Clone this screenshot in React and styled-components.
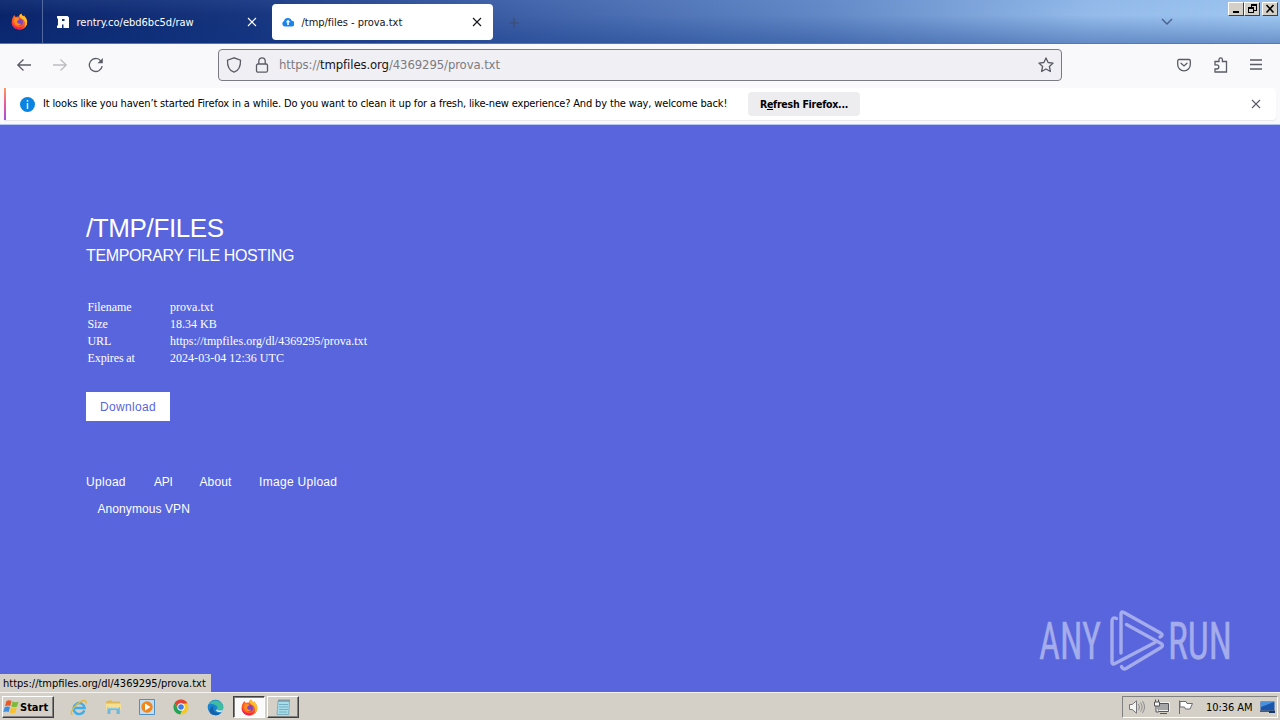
import styled, { createGlobalStyle } from "styled-components";

const links = [
    { label: "Upload", width: 68 },
    { label: "API", width: 45.5, spacing: "-0.3px" },
    { label: "About", width: 59.5, spacing: "0.1px" },
    { label: "Image Upload", width: 90 },
];

const details = [
    { label: "Filename", value: "prova.txt", spacing: "0.03px" },
    { label: "Size", value: "18.34 KB" },
    { label: "URL", value: "https://tmpfiles.org/dl/4369295/prova.txt", spacing: "0.03px" },
    { label: "Expires at", value: "2024-03-04 12:36 UTC", spacing: "0.03px" },
];

export default function App(){
    return(
    <>
        <GlobalStyle/>
        <Screen>
            <TabBar/>
            <Toolbar/>
            <Notification/>
            <Page/>
            <Taskbar/>
        </Screen>
    </>
    );
};

function TabBar(){
    return(
    <StyledTabBar>
        <PinnedTab><FirefoxIcon size={17}/></PinnedTab>
        <Tab>
            <svg width="12" height="12" viewBox="0 0 12 12">
                <path fill="#fff" d="M0 0h12v12H0z"/>
                <path fill="#14307c" d="M5 3h2.500v2H5zM5 8.500h1.500V12H5zM10.500 0H12v1.500zM0 2.500h1v7H0z"/>
            </svg>
            <TabTitle>rentry.co/ebd6bc5d/raw</TabTitle>
            <CloseIcon color="#fff"/>
        </Tab>
        <Tab $active>
            <svg width="12" height="12" viewBox="0 0 12 12">
                <path fill="#1b84ec" d="M3 10.5A2.9 2.9 0 0 1 2 5a4 4 0 0 1 7.7-.3A2.9 2.9 0 0 1 9.5 10.500z"/>
                <path fill="#fff" d="M6 3.800 8.300 6.300H6.800V9H5.200V6.300H3.700z"/>
            </svg>
            <TabTitle $spacing="-0.03px">/tmp/files - prova.txt</TabTitle>
            <CloseIcon color="#15141a"/>
        </Tab>
        <NewTab>
            <svg width="10" height="10" viewBox="0 0 10 10">
                <path d="M5 0v10M0 5h10" stroke="#3c4d70" strokeWidth="1.2"/>
            </svg>
        </NewTab>
        <TabsMenu>
            <svg width="12" height="8" viewBox="0 0 12 8">
                <path d="M1 1l5 5 5-5" fill="none" stroke="#47618c" strokeWidth="1.4"/>
            </svg>
        </TabsMenu>
        <WindowButtons>
            <WindowButton>
                <svg width="12" height="10"><path d="M3 7h6v2H3z" fill="#000"/></svg>
            </WindowButton>
            <WindowButton $gap>
                <svg width="12" height="10" viewBox="0 0 12 10" fill="none" stroke="#000" shapeRendering="crispEdges">
                    <path d="M5 3V.5h5.500V6H8M5 1.500h5M2.500 3.500h5v5h-5zM2.500 4.500h5"/>
                </svg>
            </WindowButton>
            <WindowButton>
                <svg width="12" height="10"><path d="M2.500 1l7 7.500M9.500 1l-7 7.500" stroke="#000" strokeWidth="1.600"/></svg>
            </WindowButton>
        </WindowButtons>
    </StyledTabBar>
    );
};

function Toolbar(){
    return(
    <StyledToolbar>
        <NavButtons>
            <Glyph width="16" height="16" viewBox="0 0 16 16"><path d="M15 8H1.500M7.500 2.500 1.800 8l5.700 5.500"/></Glyph>
            <Glyph width="16" height="16" viewBox="0 0 16 16" $color="#bdbdc2"><path d="M1 8h13.500M8.500 2.500 14.200 8l-5.700 5.500"/></Glyph>
            <Glyph width="16" height="16" viewBox="0 0 16 16">
                <path d="M14.200 9.200A6.500 6.500 0 1 1 12.800 3.800"/>
                <path d="M14.800 1v5.300H9.500z" fill="#5b5b66" stroke="none"/>
            </Glyph>
        </NavButtons>
        <UrlBar>
            <Glyph width="16" height="16" viewBox="0 0 16 16">
                <path d="M8 .800 1.500 3.200C1.300 8.500 3 13.500 8 15.200c5-1.700 6.700-6.700 6.500-12z"/>
            </Glyph>
            <Glyph width="14" height="16" viewBox="0 0 14 16">
                <rect x="1.500" y="7" width="11" height="8.200" rx="1.500"/>
                <path d="M3.800 7V4a3.200 3.200 0 0 1 6.400 0v3"/>
            </Glyph>
            <Url>https://<b>tmpfiles.org</b>/4369295/prova.txt</Url>
            <Glyph width="16" height="16" viewBox="0 0 16 16" strokeLinejoin="round">
                <path d="M8 .900l2.100 4.600 5 .600-3.700 3.400 1 5L8 12l-4.400 2.500 1-5L.900 6.100l5-.600z"/>
            </Glyph>
        </UrlBar>
        <ToolbarActions>
            <Glyph width="14" height="14" viewBox="0 0 14 14">
                <path d="M2 1.500h10a1.300 1.300 0 0 1 1.300 1.300V6.500a6.300 6.300 0 0 1-12.600 0V2.800A1.300 1.300 0 0 1 2 1.500z"/>
                <path d="M4 5.300 7 8l3-2.700" strokeLinecap="round"/>
            </Glyph>
            <Glyph width="15" height="16" viewBox="0 0 15 16">
                <path d="M2 7.300V4.500h4V2.600a1.700 1.700 0 0 1 3.400 0v1.900h4.100v10.500H2v-3h1.700a1.800 1.800 0 0 0 0-4.200H2z"/>
            </Glyph>
            <Glyph width="12" height="12" viewBox="0 0 12 12"><path d="M0 1h12M0 5.500h12M0 10h12"/></Glyph>
        </ToolbarActions>
    </StyledToolbar>
    );
};

function Notification(){
    return(
    <NotificationArea>
        <NotificationBar>
            <InfoIcon width="15" height="15" viewBox="0 0 15 15">
                <circle cx="7.500" cy="7.500" r="7.500" fill="#0a84e0"/>
                <path d="M7.500 3v1.800M7.500 6v6" stroke="#d8f0ff" strokeWidth="1.500"/>
            </InfoIcon>
            <Message>It looks like you haven’t started Firefox in a while. Do you want to clean it up for a fresh, like-new experience? And by the way, welcome back!</Message>
            <RefreshButton>R<u>e</u>fresh Firefox...</RefreshButton>
            <CloseIcon color="#5b5b66"/>
        </NotificationBar>
    </NotificationArea>
    );
};

function Page(){
    return(
    <StyledPage>
        <Content>
            <h1>/TMP/FILES</h1>
            <h2>TEMPORARY FILE HOSTING</h2>
            <Details>
                {details.map(({ label, value, spacing }) => (
                    <DetailRow key={label} $spacing={spacing}>
                        <dt>{label}</dt>
                        <dd>{value}</dd>
                    </DetailRow>
                ))}
            </Details>
            <Download>Download</Download>
            <Links>
                {links.map(({ label, width, spacing }) => (
                    <PageLink key={label} $width={width} $spacing={spacing}>{label}</PageLink>
                ))}
            </Links>
            <VpnLink $spacing="0.08px">Anonymous VPN</VpnLink>
        </Content>
        <Watermark/>
        <Status>https://tmpfiles.org/dl/4369295/prova.txt</Status>
    </StyledPage>
    );
};

function Watermark(){
    return(
    <StyledWatermark width="210" height="66" viewBox="0 0 210 66">
        <text x="2" y="50" textLength="62" lengthAdjust="spacingAndGlyphs">ANY</text>
        <text x="131" y="50" textLength="64" lengthAdjust="spacingAndGlyphs">RUN</text>
        <g fill="none" stroke="#a4acec" strokeWidth="3.400" strokeLinecap="round" strokeLinejoin="round">
            <path d="M79.500 9.500Q75 7.500 75 12V53Q75 56 78 54.500L118 33.500"/>
            <path d="M84 44V5Q84 2 87 3.500L123.500 24Q127 26 123 28"/>
            <path d="M89.500 15.500 124 34.500Q127 36.500 124 38.500L89 59.500Q86 61 84.500 57.500"/>
        </g>
    </StyledWatermark>
    );
};

function Taskbar(){
    return(
    <StyledTaskbar>
        <StartButton>
            <svg width="17" height="16" viewBox="0 0 17 16">
                <path fill="#e65a28" d="M3.500 2Q6 .500 8.500 2L7.300 7Q5 5.800 2 7z"/>
                <path fill="#7dba3c" d="M9.500 2.400q3 1.400 6 .300L14 7.700q-3 1-5.700-.300z"/>
                <path fill="#3c8fe0" d="M1.800 8q2.700-1.200 5.200 0L5.700 13Q3.200 11.800.300 13z"/>
                <path fill="#f6c22e" d="M8 8.400q2.800 1.300 5.700.300l-1.400 5q-3 1-5.700-.300z"/>
            </svg>
            <span>Start</span>
        </StartButton>
        <QuickLaunch>
            <TaskIcon><IeIcon/></TaskIcon>
            <TaskIcon><ExplorerIcon/></TaskIcon>
            <TaskIcon><PlayerIcon/></TaskIcon>
            <TaskIcon><ChromeIcon/></TaskIcon>
            <TaskIcon><EdgeIcon/></TaskIcon>
        </QuickLaunch>
        <TaskButton $pressed><FirefoxIcon size={17}/></TaskButton>
        <TaskButton><NotepadIcon/></TaskButton>
        <Tray>
            <svg width="18" height="16" viewBox="0 0 18 16" fill="none" stroke="#77777b">
                <path fill="#f5f5f3" d="M1.500 5.500h2.700L8.500 1.800v12.400l-4.300-3.700H1.500z"/>
                <path d="M10.500 5q2 3 0 6M12.500 3.500q3.200 4.500 0 9M14.500 2q4 6 0 12" stroke="#8d8d8f"/>
            </svg>
            <svg width="17" height="16" viewBox="0 0 17 16" fill="none" stroke="#55555a">
                <path fill="#a6a6a8" stroke="#f1f1ef" strokeWidth="2" d="M5 4h11v8H5z"/>
                <path d="M5 4.500h10.500v8H5zM7 14.500h7"/>
                <path fill="#f6f6f4" d="M1.500 3h5v4h-5zM2.500 3V.500M5.500 3V.500M3 7v6h2.500"/>
            </svg>
            <svg width="17" height="16" viewBox="0 0 17 16" stroke="#6d6d70">
                <path fill="#fff" d="M2.500 15V1.500M3 2.500h6l1 2h5.500L13 10H8.500L7.500 8H3z"/>
            </svg>
            <Clock>10:36 AM</Clock>
            <svg width="16" height="13" viewBox="0 0 16 13">
                <path fill="#1b56ad" d="M.500.500h14v9H.500z"/>
                <path fill="#4792df" d="M1 1h13L1 6z"/>
                <path fill="#163663" d="M0 9.500h15v1.300H0zM9 10h6v2H9z"/>
            </svg>
        </Tray>
    </StyledTaskbar>
    );
};

function CloseIcon({ color }){
    return(
    <svg width="10" height="10" viewBox="0 0 10 10">
        <path d="M1 1l8 8M9 1l-8 8" stroke={color} strokeWidth="1.100"/>
    </svg>
    );
};

function FirefoxIcon({ size }){
    return(
    <svg width={size} height={size} viewBox="0 0 17 17">
        <path fill="#ff5a28" d="M2.400 3.300 3.300 2l1.300 2q1.500-.600 3-.300Q8 1.800 10.200.500q.3 1.600 2 2.800l1-.800q.5 1.500 1.800 2.600Q17 8 16 11.300 14.200 16.500 8.500 16.500 2 16.300.800 10.500.200 6 2.400 3.300z"/>
        <path fill="#ffbd27" d="M10.200.500q.3 1.600 2 2.800l1-.800q.5 1.500 1.800 2.600 2 3.400.700 6.600-.8 1.500-2 2.300 1.300-4.500-1.200-7.200-2.800-1.400-4.300-3.500Q8.500 1.500 10.200.500z"/>
        <path fill="#ed2454" d="M.800 8q1 5.500 6.700 6.300 4 .300 5.700-2.300-1.400 4.300-5.200 4.500Q2 16.200.800 10.500z"/>
        <circle cx="8.500" cy="9.200" r="3.500" fill="#8047bd"/>
        <path fill="#ff8b20" d="M3.500 4.500Q6.500 4 8.500 6L6.500 7.700q-1.200 1.500.700 2.800 1.800.700 3-.3-.5 2.500-3.500 2.300Q3.400 11.600 3 8z"/>
    </svg>
    );
};

function IeIcon(){
    return(
    <svg width="18" height="17" viewBox="0 0 18 17" fill="none">
        <path d="M14.300 11.500A5.500 5.500 0 1 1 14.600 9H5" stroke="#3daee9" strokeWidth="2.400"/>
        <path d="M2.500 15.500C-.500 15.500 2 9.500 7.500 5S17 .500 16 4.500" stroke="#e3ba39" strokeWidth="1.400"/>
    </svg>
    );
};

function ExplorerIcon(){
    return(
    <svg width="17" height="16" viewBox="0 0 17 16">
        <path fill="#dfb957" d="M1 2.500 6 1l1 1.500h8V8H1z"/>
        <path fill="#f5df93" d="M1 4.500h15V11H1z"/>
        <path fill="#6fb8da" d="M2.500 8h12.300v7h-3.300v-4h-6v4h-3z"/>
        <path fill="#b5dfee" d="M3 8h11v1.500H3z"/>
    </svg>
    );
};

function PlayerIcon(){
    return(
    <svg width="16" height="16" viewBox="0 0 16 16">
        <path fill="#c3dcef" stroke="#4d91c5" d="M.500.500h15v15H.500z"/>
        <circle cx="8" cy="8" r="5.700" fill="#f1861c"/>
        <path fill="#fff" d="M6 4.500 11.500 8 6 11.500z"/>
    </svg>
    );
};

function ChromeIcon(){
    return(
    <svg width="16" height="16" viewBox="0 0 16 16">
        <circle cx="8" cy="8" r="7.500" fill="#f7c824"/>
        <path fill="#de4535" d="M1.500 4.200A7.500 7.500 0 0 1 14.500 4.300L8 5 5 9.500z"/>
        <path fill="#25a15a" d="M1.500 4.200 5 10l4 1.300-1.800 4.200A7.500 7.500 0 0 1 1.500 4.200z"/>
        <circle cx="8" cy="8" r="3.700" fill="#fff"/>
        <circle cx="8" cy="8" r="2.800" fill="#3e7de7"/>
    </svg>
    );
};

function EdgeIcon(){
    return(
    <svg width="17" height="17" viewBox="0 0 17 17">
        <circle cx="8.500" cy="8.500" r="7.800" fill="#1684cf"/>
        <path fill="#40bd9d" d="M2 5A7.800 7.800 0 0 1 16.300 8.500q0 3-3.500 3-2.600 0-3-1.300 1.500-2-.6-3.800Q6 4.300 2 5z"/>
        <path fill="#1660aa" d="M6.500 7Q5 10 8 13q2.500 1.700 6.200.200-2 3.200-6 3.100Q1 15.300 3 10 4 7.500 6.500 7z"/>
        <path fill="#d9edf0" d="M9.800 10.200q.400 1.300 3 1.300 2.500 0 3.300-1.500-.5 2-1.700 3-4 .6-5.400-1.200z"/>
    </svg>
    );
};

function NotepadIcon(){
    return(
    <svg width="15" height="17" viewBox="0 0 15 17">
        <path fill="#a8dce9" stroke="#6ba5b5" strokeWidth=".800" d="M2 2h11.500l-.8 13.500H1z"/>
        <path d="M3 5.500h9M3 8h9M3 10.500h9M3 13h8" stroke="#5c9eb2" strokeWidth=".700"/>
        <path d="M2.500 1.500h11" stroke="#536e78" strokeWidth="1.800" strokeDasharray="1 1"/>
    </svg>
    );
};

const GlobalStyle = createGlobalStyle`
* {
    box-sizing: border-box;
}
body {
    margin: 0;
    overflow: hidden;
}
svg {
    display: block;
    flex-shrink: 0;
}
`;

const Screen = styled.div`
    display: flex;
    flex-direction: column;
    width: 1280px;
    height: 720px;
    overflow: hidden;
    font-family: "DejaVu Sans Condensed", "DejaVu Sans", sans-serif;
    font-stretch: condensed;
    font-size: 11px;
    color: #000;
`;

const StyledTabBar = styled.div`
    display: flex;
    height: 44px;
    flex-shrink: 0;
    background:
        linear-gradient(180deg, rgba(120, 160, 220, 0.1), rgba(10, 50, 130, 0) 35%, rgba(10, 50, 130, 0.35)),
        linear-gradient(99deg, #0a246a 0%, #17357f 20%, #3d5fa6 40%, #6288c6 64%, #94bbea 85%, #a0c8f2 100%);
    border-bottom: 1px solid #6d7483;
`;

const PinnedTab = styled.div`
    display: flex;
    align-items: center;
    width: 43px;
    padding-left: 11px;
    border-right: 1px solid #5268a0;
`;

const Tab = styled.div`
    display: flex;
    align-items: center;
    width: ${({ $active }) => $active ? "221px" : "219px"};
    height: 36px;
    margin: 4px 0 0 ${({ $active }) => $active ? "10px" : "0"};
    padding: 0 ${({ $active }) => $active ? "11px 0 10px" : "5px 0 14px"};
    border-radius: 4px;
    background: ${({ $active }) => $active ? "#fff" : "transparent"};
    color: ${({ $active }) => $active ? "#15141a" : "#fff"};
`;

const TabTitle = styled.span`
    flex: 1;
    margin-left: 7.5px;
    letter-spacing: ${({ $spacing }) => $spacing || "0"};
    white-space: nowrap;
`;

const NewTab = styled.div`
    padding: 18px 0 0 16px;
`;

const TabsMenu = styled.div`
    margin-left: auto;
    padding: 18px 55px 0 0;
`;

const WindowButtons = styled.div`
    display: flex;
    padding: 2px 2px 0 0;
`;

const WindowButton = styled.div`
    width: 16px;
    height: 14px;
    margin-right: ${({ $gap }) => $gap ? "2px" : "0"};
    padding: 1px;
    background: #d4d0c8;
    border: 1px solid;
    border-color: #fff #404040 #404040 #fff;
`;

const StyledToolbar = styled.div`
    display: flex;
    align-items: center;
    height: 44px;
    padding-bottom: 3px;
    flex-shrink: 0;
    background: #f9f9fb;
`;

const Glyph = styled.svg`
    fill: none;
    stroke: ${({ $color }) => $color || "#5b5b66"};
    stroke-width: 1.3;
`;

const NavButtons = styled.div`
    display: flex;
    gap: 20px;
    width: 218px;
    padding-left: 16px;
`;

const UrlBar = styled.div`
    display: flex;
    align-items: center;
    gap: 13px;
    width: 844px;
    height: 32px;
    padding: 0 7px;
    margin-top: 1px;
    background: #f0f0f4;
    border: 1px solid #7b7b83;
    border-radius: 4px;
`;

const Url = styled.span`
    flex: 1;
    margin: -2px 0 0 -3px;
    font-size: 13px;
    letter-spacing: -0.11px;
    color: #7b7b82;
    b {
        font-weight: 400;
        color: #15141a;
    }
`;

const ToolbarActions = styled.div`
    display: flex;
    align-items: center;
    gap: 22px;
    margin-left: auto;
    padding-right: 18px;
`;

const NotificationArea = styled.div`
    height: 37px;
    flex-shrink: 0;
    padding: 0 4px;
    background: #f9f9fb;
    border-bottom: 1px solid #b5c5f5;
`;

const NotificationBar = styled.div`
    display: flex;
    align-items: center;
    height: 32px;
    padding-right: 15px;
    background: linear-gradient(#ff9a62, #e65a9b 50%, #9b4fe0) left / 2px 100% no-repeat, #fff;
    border-radius: 0 4px 4px 0;
    box-shadow: 0 1px 1px #e6e6ea;
    > svg:last-child {
        margin-left: auto;
    }
`;

const InfoIcon = styled.svg`
    margin-left: 16px;
`;

const Message = styled.span`
    width: 705px;
    margin: -1px 0 0 8px;
    letter-spacing: -0.147px;
    white-space: nowrap;
`;

const RefreshButton = styled.div`
    width: 112px;
    height: 24px;
    line-height: 25px;
    background: #ededf0;
    border-radius: 4px;
    font-size: 10.5px;
    font-weight: 700;
    letter-spacing: -0.25px;
    text-align: center;
`;

const StyledPage = styled.main`
    position: relative;
    height: 567px;
    flex-shrink: 0;
    background: #5865dc;
    color: #fff;
`;

const Content = styled.div`
    display: flex;
    flex-direction: column;
    align-items: flex-start;
    padding: 87px 0 0 86px;
    font-family: "Liberation Sans", Arial, sans-serif;
    h1, h2 {
        margin: 0;
        font-weight: 400;
        letter-spacing: -0.38px;
    }
    h1 {
        font-size: 26px;
        line-height: 32px;
    }
    h2 {
        font-size: 16px;
        line-height: 24px;
    }
`;

const Details = styled.dl`
    margin: 31px 0 0 1.5px;
    font-family: "Liberation Serif", "Times New Roman", serif;
    font-size: 12px;
`;

const DetailRow = styled.div`
    display: flex;
    height: 17px;
    line-height: 17px;
    dt {
        width: 82.5px;
        letter-spacing: -0.1px;
    }
    dd {
        margin: 0;
        letter-spacing: ${({ $spacing }) => $spacing || "0"};
    }
`;

const Download = styled.div`
    width: 84px;
    height: 29px;
    margin-top: 25px;
    line-height: 30px;
    background: #fff;
    color: #5865dc;
    font-size: 12px;
    letter-spacing: 0.3px;
    text-align: center;
`;

const Links = styled.nav`
    display: flex;
    margin-top: 53px;
`;

const PageLink = styled.a`
    width: ${({ $width }) => $width}px;
    font-size: 12px;
    line-height: 16px;
    letter-spacing: ${({ $spacing }) => $spacing || "0.3px"};
    white-space: nowrap;
`;

const VpnLink = styled(PageLink)`
    width: auto;
    margin: 11px 0 0 11.5px;
`;

const StyledWatermark = styled.svg`
    position: absolute;
    left: 1037px;
    top: 484px;
    overflow: visible;
    text {
        font-family: Roboto, sans-serif;
        font-size: 51px;
        fill: #a4acec;
        stroke: #a4acec;
        stroke-width: 0.4px;
    }
`;

const Status = styled.div`
    position: absolute;
    left: 0;
    bottom: 0;
    width: 211px;
    height: 18px;
    padding-left: 3px;
    line-height: 20px;
    background: #d4d0c8;
    color: #000;
    white-space: nowrap;
`;

const StyledTaskbar = styled.div`
    display: flex;
    align-items: center;
    height: 28px;
    flex-shrink: 0;
    padding: 1px 2px 0 2px;
    background: #d4d0c8;
    border-top: 1px solid #f4f2ee;
`;

const StartButton = styled.div`
    display: flex;
    align-items: center;
    width: 52px;
    height: 22px;
    border: 1px solid;
    border-color: #fff #404040 #404040 #fff;
    box-shadow: inset -1px -1px #808080;
    font-weight: 700;
`;

const QuickLaunch = styled.div`
    display: flex;
    padding-left: 8px;
    width: 179px;
`;

const TaskIcon = styled.div`
    display: flex;
    justify-content: center;
    align-items: center;
    width: 34px;
    height: 22px;
`;

const TaskButton = styled.div`
    display: flex;
    justify-content: center;
    align-items: center;
    width: 32px;
    height: 22px;
    margin-right: 2px;
    border: 1px solid;
    border-color: ${({ $pressed }) => $pressed ? "#404040 #fff #fff #404040" : "#fff #404040 #404040 #fff"};
    box-shadow: ${({ $pressed }) => $pressed ? "inset 1px 1px #808080" : "inset -1px -1px #808080"};
    background: ${({ $pressed }) => $pressed ? "#fbfafa" : "#d4d0c8"};
`;

const Tray = styled.div`
    display: flex;
    align-items: center;
    gap: 7px;
    width: 156px;
    height: 22px;
    margin-left: auto;
    padding-left: 5px;
    border: 1px solid;
    border-color: #808080 #fff #fff #808080;
`;

const Clock = styled.span`
    width: 47px;
    margin-left: 5px;
    white-space: nowrap;
    letter-spacing: -0.05px;
`;
